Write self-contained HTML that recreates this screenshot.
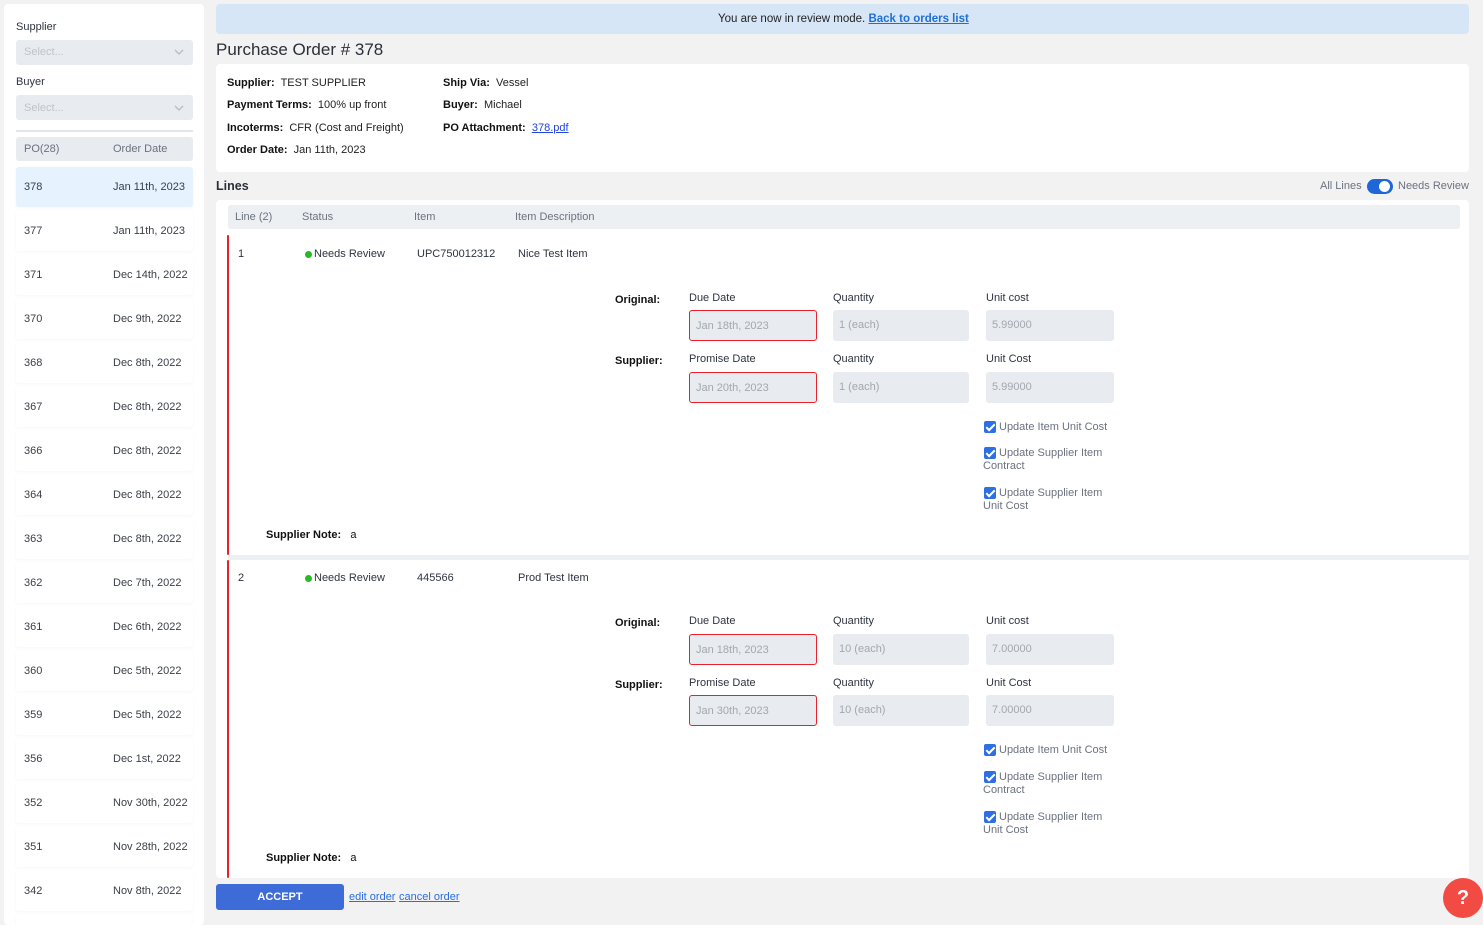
<!DOCTYPE html>
<html><head><meta charset="utf-8">
<style>
*{box-sizing:border-box;margin:0;padding:0}
html,body{width:1483px;height:925px;overflow:hidden}
body{background:#f2f2f2;font-family:"Liberation Sans",sans-serif;color:#2d3340;font-size:11px;position:relative}
.a{position:absolute;white-space:nowrap;line-height:16px}
.b{font-weight:bold;color:#111}
.box{position:absolute;border-radius:3px;background:#e8ebef}
.inp{position:absolute;height:31px;border-radius:3px;background:#e8ebef;color:#a3a8b0;font-size:11px;line-height:31px;padding-left:6px}
.red{border:1px solid #e8202a}
.cb{position:absolute;width:12px;height:12px;background:#2f6fe4;border-radius:2px}
.cb:after{content:"";position:absolute;left:4px;top:1px;width:3px;height:7px;border:solid #fff;border-width:0 2px 2px 0;transform:rotate(45deg)}
.g{color:#6b7280}
.ml{position:absolute;width:130px;line-height:13px;text-indent:16px;color:#6b7280;font-size:11px}
.row{position:absolute;left:16px;width:177px;height:40px;background:#fff;border-radius:3px;box-shadow:0 1px 3px rgba(0,0,0,.04)}
.row span{position:absolute;top:12px;line-height:16px;font-size:11px;color:#3a3f48}
#sb{position:absolute;left:4px;top:4px;width:200px;height:921px;background:#fff;border-radius:4px;overflow:hidden}
</style></head><body>
<div id="sb"></div>
<div class="a" style="left:16px;top:19px">Supplier</div>
<div class="box" style="left:16px;top:40px;width:177px;height:25px"></div>
<div class="a" style="left:24px;top:44px;color:#c0c4ca">Select...</div>
<svg style="position:absolute;left:174px;top:48px" width="10" height="8"><path d="M1 2l4 4 4-4" stroke="#b8bcc2" stroke-width="1.3" fill="none"/></svg>
<div class="a" style="left:16px;top:74px">Buyer</div>
<div class="box" style="left:16px;top:95px;width:177px;height:25px"></div>
<div class="a" style="left:24px;top:100px;color:#c0c4ca">Select...</div>
<svg style="position:absolute;left:174px;top:104px" width="10" height="8"><path d="M1 2l4 4 4-4" stroke="#b8bcc2" stroke-width="1.3" fill="none"/></svg>
<div style="position:absolute;left:16px;top:130px;width:177px;height:2px;background:#e3e6ea"></div>
<div class="box" style="left:16px;top:137px;width:177px;height:24px"></div>
<div class="a g" style="left:24px;top:141px">PO(28)</div>
<div class="a g" style="left:113px;top:141px">Order Date</div>
<div class="row" style="top:167px;background:#e6f2fd"><span style="left:8px">378</span><span style="left:97px">Jan 11th, 2023</span></div>
<div class="row" style="top:211px"><span style="left:8px">377</span><span style="left:97px">Jan 11th, 2023</span></div>
<div class="row" style="top:255px"><span style="left:8px">371</span><span style="left:97px">Dec 14th, 2022</span></div>
<div class="row" style="top:299px"><span style="left:8px">370</span><span style="left:97px">Dec 9th, 2022</span></div>
<div class="row" style="top:343px"><span style="left:8px">368</span><span style="left:97px">Dec 8th, 2022</span></div>
<div class="row" style="top:387px"><span style="left:8px">367</span><span style="left:97px">Dec 8th, 2022</span></div>
<div class="row" style="top:431px"><span style="left:8px">366</span><span style="left:97px">Dec 8th, 2022</span></div>
<div class="row" style="top:475px"><span style="left:8px">364</span><span style="left:97px">Dec 8th, 2022</span></div>
<div class="row" style="top:519px"><span style="left:8px">363</span><span style="left:97px">Dec 8th, 2022</span></div>
<div class="row" style="top:563px"><span style="left:8px">362</span><span style="left:97px">Dec 7th, 2022</span></div>
<div class="row" style="top:607px"><span style="left:8px">361</span><span style="left:97px">Dec 6th, 2022</span></div>
<div class="row" style="top:651px"><span style="left:8px">360</span><span style="left:97px">Dec 5th, 2022</span></div>
<div class="row" style="top:695px"><span style="left:8px">359</span><span style="left:97px">Dec 5th, 2022</span></div>
<div class="row" style="top:739px"><span style="left:8px">356</span><span style="left:97px">Dec 1st, 2022</span></div>
<div class="row" style="top:783px"><span style="left:8px">352</span><span style="left:97px">Nov 30th, 2022</span></div>
<div class="row" style="top:827px"><span style="left:8px">351</span><span style="left:97px">Nov 28th, 2022</span></div>
<div class="row" style="top:871px"><span style="left:8px">342</span><span style="left:97px">Nov 8th, 2022</span></div>
<div class="row" style="top:915px;height:10px"></div>

<div style="position:absolute;left:216px;top:4px;width:1253px;height:30px;background:#d6e6f6;border-radius:4px"></div>
<div class="a" style="left:718px;top:11px;font-size:11.5px;color:#222">You are now in review mode. <span style="color:#1f6fd9;font-weight:bold;text-decoration:underline">Back to orders list</span></div>
<div class="a" style="left:216px;top:39px;font-size:17px;line-height:22px;color:#2a2f38">Purchase Order # 378</div>
<div style="position:absolute;left:216px;top:64px;width:1253px;height:108px;background:#fff;border-radius:4px"></div>
<div class="a" style="left:227px;top:75px;color:#222"><b class="b">Supplier:</b>&nbsp; TEST SUPPLIER</div>
<div class="a" style="left:227px;top:97px;color:#222"><b class="b">Payment Terms:</b>&nbsp; 100% up front</div>
<div class="a" style="left:227px;top:120px;color:#222"><b class="b">Incoterms:</b>&nbsp; CFR (Cost and Freight)</div>
<div class="a" style="left:227px;top:142px;color:#222"><b class="b">Order Date:</b>&nbsp; Jan 11th, 2023</div>
<div class="a" style="left:443px;top:75px;color:#222"><b class="b">Ship Via:</b>&nbsp; Vessel</div>
<div class="a" style="left:443px;top:97px;color:#222"><b class="b">Buyer:</b>&nbsp; Michael</div>
<div class="a" style="left:443px;top:120px;color:#222"><b class="b">PO Attachment:</b>&nbsp; <span style="color:#2244dd;text-decoration:underline">378.pdf</span></div>
<div class="a" style="left:216px;top:177px;font-size:12.5px;line-height:18px;font-weight:bold;color:#2a2f38">Lines</div>
<div class="a g" style="left:1320px;top:178px">All Lines</div>
<div style="position:absolute;left:1367px;top:179px;width:26px;height:15px;border-radius:8px;background:#1f66d6"></div>
<div style="position:absolute;left:1379px;top:181px;width:11px;height:11px;border-radius:50%;background:#fff"></div>
<div class="a g" style="left:1398px;top:178px">Needs Review</div>

<div style="position:absolute;left:216px;top:200px;width:1253px;height:678px;background:#fff;border-radius:4px"></div>
<div class="box" style="left:228px;top:205px;width:1232px;height:24px;background:#edf0f3"></div>
<div class="a g" style="left:235px;top:209px">Line (2)</div>
<div class="a g" style="left:302px;top:209px">Status</div>
<div class="a g" style="left:414px;top:209px">Item</div>
<div class="a g" style="left:515px;top:209px">Item Description</div>
<div style="position:absolute;left:228px;top:555px;width:1241px;height:5px;background:#edf0f3"></div>
<div style="position:absolute;left:227px;top:235px;width:2px;height:320px;background:#e8202a;border-radius:2px"></div>
<div style="position:absolute;left:227px;top:560px;width:2px;height:318px;background:#e8202a;border-radius:2px"></div>

<div class="a" style="left:238px;top:246px">1</div>
<div style="position:absolute;left:305px;top:251px;width:7px;height:7px;border-radius:50%;background:#28b828"></div>
<div class="a" style="left:314px;top:246px">Needs Review</div>
<div class="a" style="left:417px;top:246px">UPC750012312</div>
<div class="a" style="left:518px;top:246px">Nice Test Item</div>
<div class="a b" style="left:615px;top:292px">Original:</div>
<div class="a" style="left:689px;top:290px">Due Date</div>
<div class="a" style="left:833px;top:290px">Quantity</div>
<div class="a" style="left:986px;top:290px">Unit cost</div>
<div class="inp red" style="left:689px;top:310px;width:128px">Jan 18th, 2023</div>
<div class="inp" style="left:833px;top:310px;width:136px">1 (each)</div>
<div class="inp" style="left:986px;top:310px;width:128px">5.99000</div>
<div class="a b" style="left:615px;top:353px">Supplier:</div>
<div class="a" style="left:689px;top:351px">Promise Date</div>
<div class="a" style="left:833px;top:351px">Quantity</div>
<div class="a" style="left:986px;top:351px">Unit Cost</div>
<div class="inp red" style="left:689px;top:372px;width:128px">Jan 20th, 2023</div>
<div class="inp" style="left:833px;top:372px;width:136px">1 (each)</div>
<div class="inp" style="left:986px;top:372px;width:128px">5.99000</div>
<div class="cb" style="left:984px;top:421px"></div><div class="a g" style="left:999px;top:419px">Update Item Unit Cost</div>
<div class="cb" style="left:984px;top:447px"></div><div class="ml" style="left:983px;top:447px">Update Supplier Item Contract</div>
<div class="cb" style="left:984px;top:487px"></div><div class="ml" style="left:983px;top:487px">Update Supplier Item Unit Cost</div>
<div class="a" style="left:266px;top:527px;color:#111"><b>Supplier Note:</b>&nbsp;&nbsp; a</div>

<div class="a" style="left:238px;top:570px">2</div>
<div style="position:absolute;left:305px;top:575px;width:7px;height:7px;border-radius:50%;background:#28b828"></div>
<div class="a" style="left:314px;top:570px">Needs Review</div>
<div class="a" style="left:417px;top:570px">445566</div>
<div class="a" style="left:518px;top:570px">Prod Test Item</div>
<div class="a b" style="left:615px;top:615px">Original:</div>
<div class="a" style="left:689px;top:613px">Due Date</div>
<div class="a" style="left:833px;top:613px">Quantity</div>
<div class="a" style="left:986px;top:613px">Unit cost</div>
<div class="inp red" style="left:689px;top:634px;width:128px">Jan 18th, 2023</div>
<div class="inp" style="left:833px;top:634px;width:136px">10 (each)</div>
<div class="inp" style="left:986px;top:634px;width:128px">7.00000</div>
<div class="a b" style="left:615px;top:677px">Supplier:</div>
<div class="a" style="left:689px;top:675px">Promise Date</div>
<div class="a" style="left:833px;top:675px">Quantity</div>
<div class="a" style="left:986px;top:675px">Unit Cost</div>
<div class="inp red" style="left:689px;top:695px;width:128px">Jan 30th, 2023</div>
<div class="inp" style="left:833px;top:695px;width:136px">10 (each)</div>
<div class="inp" style="left:986px;top:695px;width:128px">7.00000</div>
<div class="cb" style="left:984px;top:744px"></div><div class="a g" style="left:999px;top:742px">Update Item Unit Cost</div>
<div class="cb" style="left:984px;top:771px"></div><div class="ml" style="left:983px;top:771px">Update Supplier Item Contract</div>
<div class="cb" style="left:984px;top:811px"></div><div class="ml" style="left:983px;top:811px">Update Supplier Item Unit Cost</div>
<div class="a" style="left:266px;top:850px;color:#111"><b>Supplier Note:</b>&nbsp;&nbsp; a</div>

<div style="position:absolute;left:216px;top:884px;width:128px;height:26px;background:#3d6bd8;border-radius:3px;color:#fff;font-weight:bold;font-size:11px;line-height:26px;text-align:center">ACCEPT</div>
<div class="a" style="left:349px;top:889px;color:#2a6ee0;text-decoration:underline">edit order</div>
<div class="a" style="left:399px;top:889px;color:#2a6ee0;text-decoration:underline">cancel order</div>
<div style="position:absolute;left:1443px;top:878px;width:40px;height:40px;border-radius:50%;background:#f24b44;color:#fff;font-weight:bold;font-size:20px;line-height:40px;text-align:center">?</div>
</body></html>
